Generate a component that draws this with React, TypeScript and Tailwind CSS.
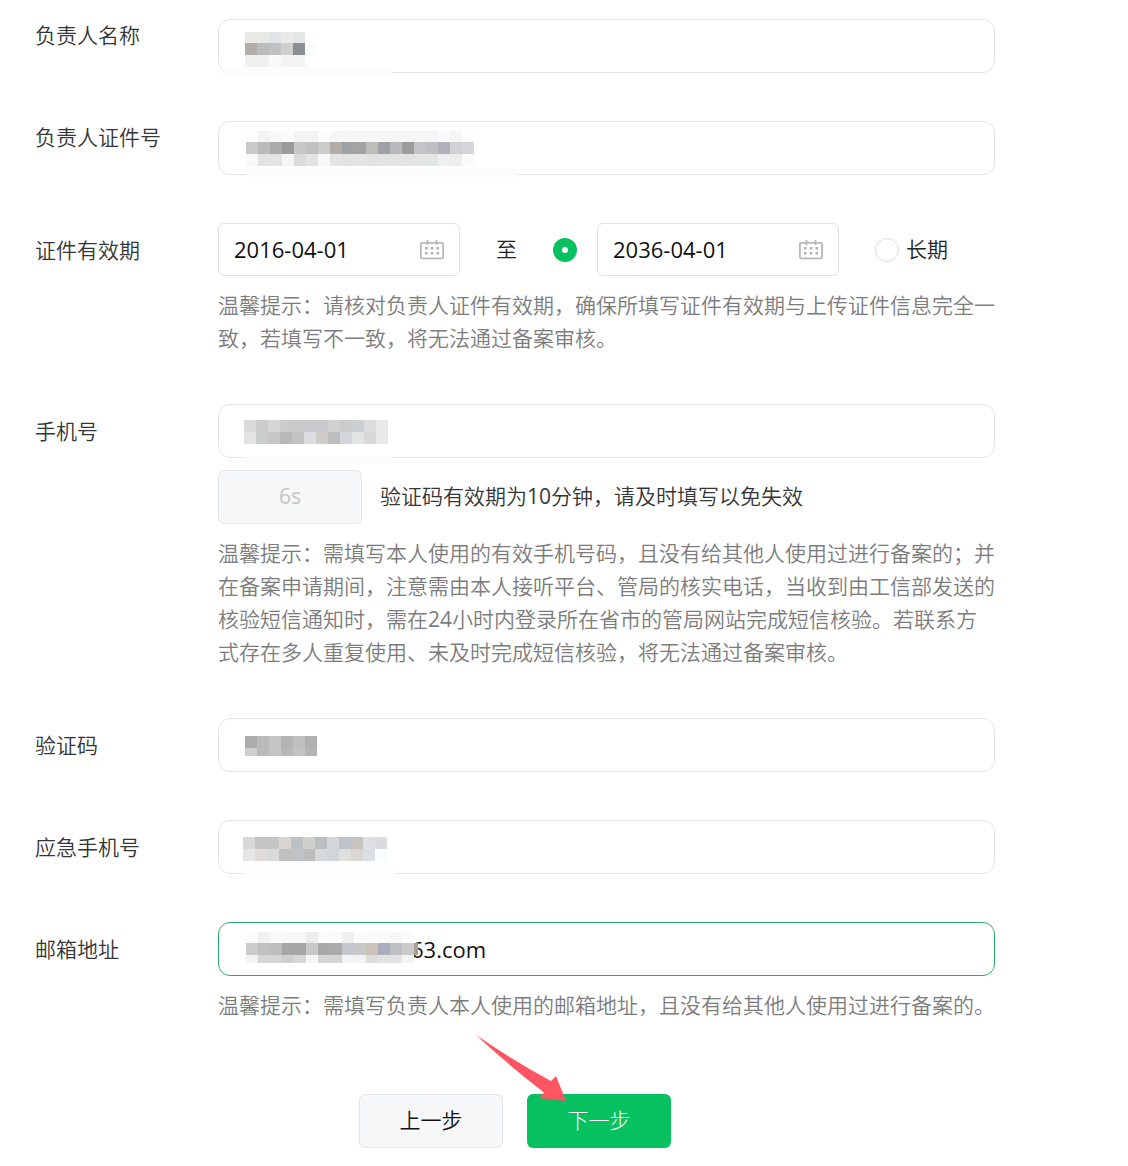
import { useState } from "react";
import type { ReactNode } from "react";

type MosaicRow = { h: number; cells: string[] };

const CELL = 12;

const NAME_MASK: MosaicRow[] = [
  { h: 11, cells: ["#e9e9e7", "#e8e8e7", "#e1e4e4", "#e9eaea", "#e4e7e8", "#fdfeff"] },
  { h: 12, cells: ["#b3aeaa", "#bbbcbe", "#bfc1c3", "#d0cfcd", "#8b8e95", "#f9fcfd"] },
  { h: 12, cells: ["#f0f0f0", "#efefef", "#f9f9f9", "#f3f3f3", "#f3f3f3"] },
];

const ID_MASK: MosaicRow[] = [
  {
    h: 11,
    cells: ["#fdfdfd", "#f3f3f3", "#f8f8f8", "#fbfbfb", "#f4f4f4", "#f4f4f4", "#fcfcfc", "#f6f6f6", "#f5f5f5", "#f6f6f6", "#f6f6f6", "#f6f6f6", "#f6f6f6", "#f6f6f6", "#f6f6f6", "#f6f6f6", "#fafafa", "#f7f6f5", "#fdfdfd"],
  },
  {
    h: 12,
    cells: ["#c9c9cb", "#bababa", "#a9abaa", "#9a9a9a", "#c6c6c6", "#c0c0c0", "#cbcbcc", "#b2ada9", "#a0a3a6", "#a3a3a3", "#bfbdb8", "#9ea2a6", "#b7b9bc", "#9e9b9d", "#c3c4c7", "#bfc0c6", "#b0b0b8", "#d0d1d2", "#d4d5d8"],
  },
  {
    h: 12,
    cells: ["#f8f8f8", "#e2e2e2", "#e3e3e3", "#f5f5f5", "#dcdcdc", "#e3e3e3", "#f8f8f8", "#e4e4e4", "#e2e2e2", "#e4e4e4", "#e2e2e0", "#e2e3e3", "#e3e3e3", "#e2e2e2", "#e3e4e4", "#e3e4e4", "#edf0f0", "#eeedeb", "#fbfbfb"],
  },
];

const PHONE_MASK: MosaicRow[] = [
  { h: 12, cells: ["#d9dadb", "#cacccc", "#d6d6d6", "#cbcbcb", "#cbcac9", "#c9cacc", "#c9cacd", "#d0d0d0", "#cacbcb", "#cacfd3", "#dddddc", "#e7e8ea"] },
  { h: 12, cells: ["#e3e3e3", "#cacccc", "#c8c7c5", "#b8b8b7", "#c1c2c1", "#dcdde1", "#cfccc9", "#bdbdbd", "#d2d6da", "#e3e4e4", "#d9d8d6", "#e7e8ea"] },
];

const CODE_MASK: MosaicRow[] = [
  { h: 12, cells: ["#acacac", "#b9b9b9", "#c4c4c4", "#b4b4b4", "#bec0c0", "#b1b1b1"] },
  { h: 8, cells: ["#cecece", "#bababa", "#c4c4c4", "#b8b8b8", "#c3c3c3", "#b4b4b4"] },
];

const BACKUP_PHONE_MASK: MosaicRow[] = [
  { h: 12, cells: ["#d8d8d8", "#c5c5c5", "#c5c5c5", "#d8d4d2", "#bec1c3", "#cfcfcd", "#bcbfc0", "#d5d6d7", "#bec3c9", "#c8c4c1", "#dedfe4", "#dadbe0"] },
  { h: 12, cells: ["#e6e6e6", "#e0dbd8", "#d8d9d9", "#c0c1c2", "#bfc4c7", "#bebdbc", "#d5d9dd", "#d1d5d8", "#e1dfde", "#d9d7d1", "#dcdfe5", "#fafdff"] },
];

const EMAIL_MASK: MosaicRow[] = [
  { h: 11, cells: ["#fbfbfb", "#f2f2f2", "#f9f9f9", "#f8f8f8", "#f7f7f7", "#ececec", "#fbfbfb", "#fafafa", "#efefef", "#fcfcfc", "#fafafa", "#fafafa", "#f6f6f6", "#fafafa"] },
  { h: 12, cells: ["#cbcbcc", "#bfc1c0", "#bcbebd", "#a5a8a7", "#a5a8a7", "#c9c9ca", "#aba8a8", "#adaaaa", "#c4c8cc", "#c6c8ca", "#cbc3b9", "#a9afba", "#bcc0c4", "#cacaca", "#a99d98"] },
  { h: 8, cells: ["#f3f3f3", "#d6d6d6", "#d6d6d6", "#d0d0d0", "#d8d8d8", "#f6f6f6", "#d6d6d6", "#d6d6d6", "#f3f3f3", "#f3f3f3", "#dcdcdc", "#e2e2e2", "#e2e2e2", "#f4f4f4"] },
];

function Mosaic({ rows, className, width = 240 }: { rows: MosaicRow[]; className: string; width?: number }) {
  let y = 0;
  return (
    <svg
      width={width}
      height={40}
      shapeRendering="crispEdges"
      aria-hidden="true"
      className={`pointer-events-none absolute ${className}`}
    >
      {rows.map((row, r) => {
        const top = y;
        y += row.h;
        return row.cells.map((fill, c) => (
          <rect key={`${r}-${c}`} x={c * CELL} y={top} width={CELL} height={row.h} fill={fill} />
        ));
      })}
    </svg>
  );
}

function CalendarIcon() {
  return (
    <svg width="24" height="20" viewBox="0 0 24 20" fill="none" aria-hidden="true">
      <rect x="0.9" y="2.9" width="22.2" height="15.4" rx="1" stroke="#b8b8b8" strokeWidth="1.8" />
      <path d="M7.5 0v5M16.5 0v5" stroke="#b8b8b8" strokeWidth="1.8" />
      <path
        d="M5 7h2.5v2.5H5zM10.8 7h2.5v2.5h-2.5zM16.5 7h2.5v2.5h-2.5zM5 12h2.5v2.5H5zM10.8 12h2.5v2.5h-2.5zM16.5 12h2.5v2.5h-2.5z"
        fill="#b0b0b0"
      />
    </svg>
  );
}

function Row({ id, label, top = false, children }: { id: string; label: string; top?: boolean; children: ReactNode }) {
  return (
    <div className="grid grid-cols-[183px_1fr]">
      <label htmlFor={id} className={top ? "leading-[33px] text-[#353535]" : "leading-[54px] text-[#353535]"}>
        {label}
      </label>
      <div className="min-w-0">{children}</div>
    </div>
  );
}

function TextField({ id, type = "text", children }: { id: string; type?: string; children?: ReactNode }) {
  return (
    <div className="relative">
      <input
        id={id}
        type={type}
        className="block h-[54px] w-full rounded-xl border border-[#e4e4e4] bg-white px-6 text-[22px] font-normal text-[#111] outline-none"
      />
      {children}
    </div>
  );
}

function DateField({ id, label, value, onChange }: { id: string; label: string; value: string; onChange: (v: string) => void }) {
  return (
    <div className="flex h-[53px] w-[242px] items-center rounded-md border border-[#e0e0e0] bg-white px-[15px]">
      <input
        id={id}
        aria-label={label}
        value={value}
        onChange={(e) => onChange(e.target.value)}
        className="min-w-0 flex-1 text-[22px] font-normal text-[#111] outline-none"
      />
      <button type="button" aria-label="选择日期">
        <CalendarIcon />
      </button>
    </div>
  );
}

function Hint({ children }: { children: ReactNode }) {
  return <p className="mt-[13px] pb-px leading-[33px] text-[#7c7c7c]">{children}</p>;
}

const radioClass =
  "size-6 shrink-0 appearance-none rounded-full border border-[#dcdcdc] bg-white checked:border-[9px] checked:border-[#07c160]";

export default function App() {
  const [startDate, setStartDate] = useState("2016-04-01");
  const [endDate, setEndDate] = useState("2036-04-01");
  const [longTerm, setLongTerm] = useState(false);
  const [email, setEmail] = useState("63.com");

  return (
    <form
      onSubmit={(e) => e.preventDefault()}
      className="bg-white pt-[19px] pr-[133px] pb-[18px] pl-[35px] font-['Open_Sans','Noto_Sans_CJK_SC',sans-serif] text-[21px] font-[350]"
    >
      <div className="flex flex-col gap-12">
        <Row id="owner-name" label="负责人名称" top>
          <TextField id="owner-name">
            <Mosaic rows={NAME_MASK} className="top-[13px] left-[27px]" />
            <div className="absolute top-12 left-1 h-2 w-[170px] bg-[#fcfcfc]" />
          </TextField>
        </Row>

        <Row id="owner-id" label="负责人证件号" top>
          <TextField id="owner-id">
            <Mosaic rows={ID_MASK} className="top-[10px] left-7" />
            <div className="absolute top-12 left-7 h-2 w-[272px] bg-[#fcfcfc]" />
          </TextField>
        </Row>

        <Row id="start-date" label="证件有效期">
          <div className="flex items-center">
            <DateField id="start-date" label="开始日期" value={startDate} onChange={setStartDate} />
            <span className="mx-9 text-[#222]">至</span>
            <input
              type="radio"
              name="term"
              aria-label="指定结束日期"
              checked={!longTerm}
              onChange={() => setLongTerm(false)}
              className={`${radioClass} mr-5`}
            />
            <DateField id="end-date" label="结束日期" value={endDate} onChange={setEndDate} />
            <label className="ml-9 flex items-center gap-[7px] whitespace-nowrap text-[#222]">
              <input
                type="radio"
                name="term"
                checked={longTerm}
                onChange={() => setLongTerm(true)}
                className={radioClass}
              />
              长期
            </label>
          </div>
          <Hint>
            温馨提示：请核对负责人证件有效期，确保所填写证件有效期与上传证件信息完全一致，若填写不一致，将无法通过备案审核。
          </Hint>
        </Row>

        <Row id="phone" label="手机号">
          <TextField id="phone" type="tel">
            <Mosaic rows={PHONE_MASK} className="top-4 left-[26px]" />
            <div className="absolute top-[52px] left-[26px] h-2 w-[147px] bg-[#fcfcfc]" />
          </TextField>
          <div className="mt-3 flex items-center gap-[18px]">
            <button
              type="button"
              disabled
              className="h-[54px] w-36 rounded-md border border-[#e2e4e6] bg-[#f6f7f9] font-normal text-[#c4c4c4]"
            >
              6s
            </button>
            <span className="text-[#353535]">
              验证码有效期为<span className="font-normal">10</span>分钟，请及时填写以免失效
            </span>
          </div>
          <Hint>
            温馨提示：需填写本人使用的有效手机号码，且没有给其他人使用过进行备案的；并在备案申请期间，注意需由本人接听平台、管局的核实电话，当收到由工信部发送的核验短信通知时，需在
            <span className="font-normal">24</span>
            小时内登录所在省市的管局网站完成短信核验。若联系方式存在多人重复使用、未及时完成短信核验，将无法通过备案审核。
          </Hint>
        </Row>

        <Row id="code" label="验证码">
          <TextField id="code">
            <Mosaic rows={CODE_MASK} className="top-[18px] left-[27px]" />
          </TextField>
        </Row>

        <Row id="backup-phone" label="应急手机号">
          <TextField id="backup-phone" type="tel">
            <Mosaic rows={BACKUP_PHONE_MASK} className="top-[17px] left-[25px]" />
            <div className="absolute bottom-0 left-[25px] h-1 w-[153px] bg-[#fdfdfd]" />
          </TextField>
        </Row>

        <Row id="email" label="邮箱地址">
          <div className="relative">
            <input
              id="email"
              value={email}
              onChange={(e) => setEmail(e.target.value)}
              className="block h-[54px] w-full rounded-xl border border-[#2aae67] bg-white pr-6 pl-48 text-[22px] font-normal text-[#111] outline-none"
            />
            <Mosaic rows={EMAIL_MASK} width={172} className="top-[10px] left-7" />
          </div>
          <Hint>温馨提示：需填写负责人本人使用的邮箱地址，且没有给其他人使用过进行备案的。</Hint>
        </Row>
      </div>

      <div className="mt-[71px] flex justify-center gap-6">
        <button
          type="button"
          className="h-[54px] w-36 rounded-md border border-[#e2e4e6] bg-[#f6f7f9] text-[#111]"
        >
          上一步
        </button>
        <div className="relative">
          <button type="submit" className="h-[54px] w-36 rounded-md bg-[#07c160] font-light text-white">
            下一步
          </button>
          <svg
            width="92"
            height="68"
            viewBox="0 0 92 68"
            aria-hidden="true"
            className="pointer-events-none absolute -top-[59px] -left-[51px]"
          >
            <path d="M0 0Q38 26 75 46L80 41L90 66L63 63L68 57.5Q30 28 0 0Z" fill="#ff5562" />
          </svg>
        </div>
      </div>
    </form>
  );
}
